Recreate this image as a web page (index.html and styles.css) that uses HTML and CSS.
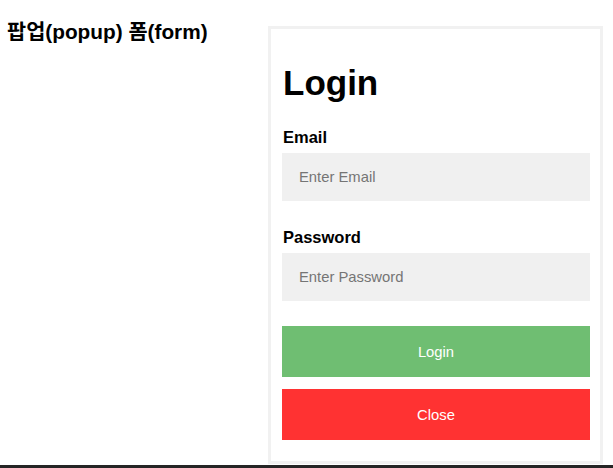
FILE: index.html
```html
<!DOCTYPE html>
<html lang="ko">
<head>
<meta charset="utf-8">
<title>팝업 폼</title>
<link rel="stylesheet" href="styles.css">
</head>
<body>
<h2 class="page-title">팝업(popup) 폼(form)</h2>

<div class="form-popup">
  <form class="form-container">
    <h1 class="form-title">Login</h1>

    <label class="field-label" for="email">Email</label>
    <input class="field-input" type="text" id="email" placeholder="Enter Email">

    <label class="field-label" for="psw">Password</label>
    <input class="field-input" type="password" id="psw" placeholder="Enter Password">

    <button type="button" class="btn btn-login">Login</button>
    <button type="button" class="btn btn-cancel">Close</button>
  </form>
</div>

<div class="taskbar"></div>
</body>
</html>
```

FILE: styles.css
```css
html, body {
  margin: 0;
  padding: 0;
  background: #ffffff;
}

body {
  font-family: "Liberation Sans", Arial, "Noto Sans CJK KR", sans-serif;
  color: #000;
}

.page-title {
  margin: 0;
  padding: 20px 0 0 7px;
  font-size: 20.8px;
  line-height: 24px;
  font-weight: bold;
}

.form-popup {
  position: fixed;
  right: 10px;
  bottom: 4px;
  border: 3px solid #f1f1f1;
  z-index: 9;
}

.form-container {
  display: flex;
  flex-direction: column;
  width: 329px;
  box-sizing: border-box;
  padding: 34px 10px 21px 11px;
  background: #ffffff;
}

.form-title {
  margin: 0 0 24px 1px;
  font-size: 35px;
  line-height: 40px;
  font-weight: bold;
}

.field-label {
  margin: 0 0 6px 1px;
  font-size: 16.5px;
  line-height: 20px;
  font-weight: bold;
}

.field-input {
  height: 48px;
  box-sizing: border-box;
  margin: 0 0 26px 0;
  padding: 0 17px;
  border: none;
  background: #f0f0f0;
  font-family: "Liberation Sans", Arial, sans-serif;
  font-size: 14.8px;
  color: #000;
  outline: none;
}

.field-input::placeholder {
  color: #757575;
}

.field-input:last-of-type {
  margin-bottom: 25px;
}

.btn {
  height: 51px;
  margin: 0 0 12px 0;
  padding: 0;
  border: none;
  color: #ffffff;
  font-family: "Liberation Sans", Arial, sans-serif;
  font-size: 14.8px;
  cursor: pointer;
  opacity: 0.8;
}

.btn:last-child {
  margin-bottom: 0;
}

.btn-login {
  background-color: #4CAF50;
}

.btn-cancel {
  background-color: #ff0000;
}

.taskbar {
  position: fixed;
  left: 0;
  right: 0;
  bottom: 0;
  height: 3px;
  background: #252525;
}
```
